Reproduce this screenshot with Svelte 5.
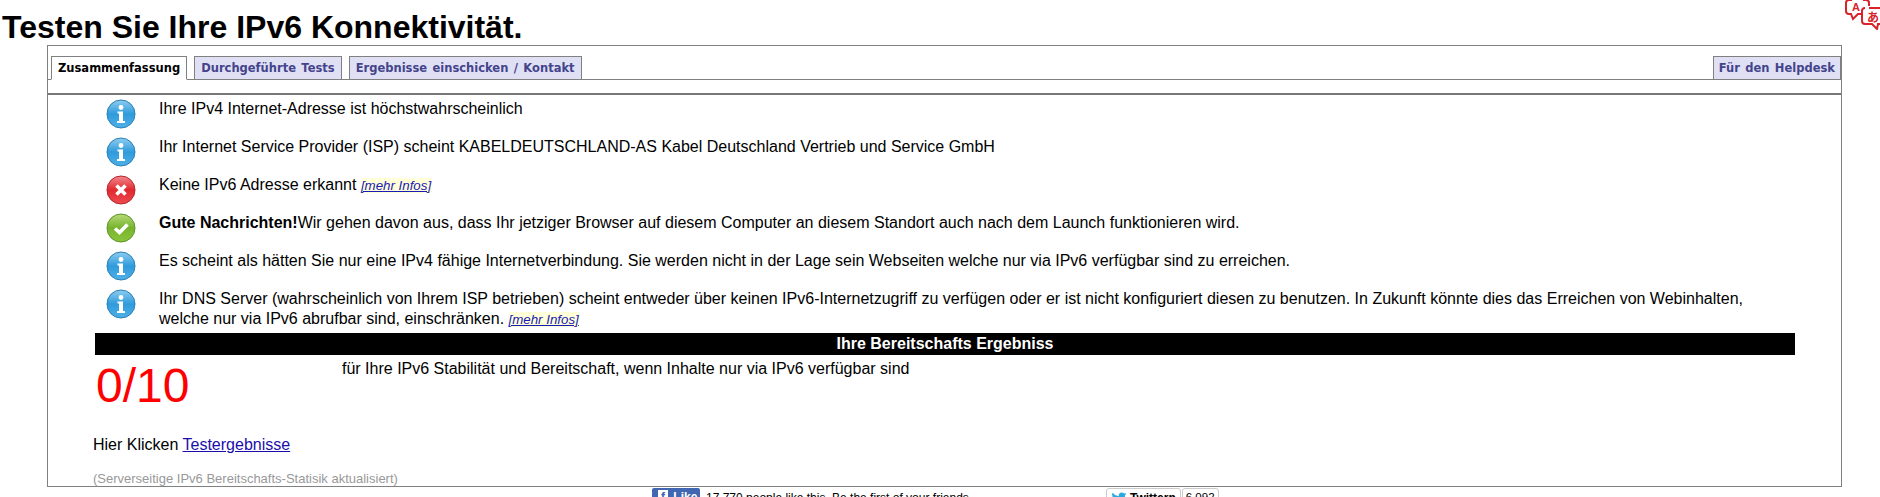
<script>
  const rows = [
    { icon: 'info', text: 'Ihre IPv4 Internet-Adresse ist höchstwahrscheinlich' },
    { icon: 'info', text: 'Ihr Internet Service Provider (ISP) scheint KABELDEUTSCHLAND-AS Kabel Deutschland Vertrieb und Service GmbH' },
    { icon: 'bad', text: 'Keine IPv6 Adresse erkannt ', more: true },
    { icon: 'ok', strong: 'Gute Nachrichten!', text: 'Wir gehen davon aus, dass Ihr jetziger Browser auf diesem Computer an diesem Standort auch nach dem Launch funktionieren wird.' },
    { icon: 'info', text: 'Es scheint als hätten Sie nur eine IPv4 fähige Internetverbindung. Sie werden nicht in der Lage sein Webseiten welche nur via IPv6 verfügbar sind zu erreichen.' },
    { icon: 'info', text: 'Ihr DNS Server (wahrscheinlich von Ihrem ISP betrieben) scheint entweder über keinen IPv6-Internetzugriff zu verfügen oder er ist nicht konfiguriert diesen zu benutzen. In Zukunft könnte dies das Erreichen von Webinhalten, welche nur via IPv6 abrufbar sind, einschränken. ', more: true }
  ];
</script>

<div class="page">
  <h1>Testen Sie Ihre IPv6 Konnektivität.</h1>

  <svg class="translate" viewBox="0 0 35 30" width="35" height="30" fill="none" stroke="#d8232a" stroke-width="2">
    <path d="M7 0H4a3 3 0 0 0-3 3v8a3 3 0 0 0 3 3h2l2 5 5-5h3" />
    <path d="M18 0h3a3 3 0 0 1 3 3v3" />
    <text x="7" y="11" class="tr-a">A</text>
    <path d="M20 8a3 3 0 0 0-3 3v10a3 3 0 0 0 3 3h7l5 5 1-5h2" />
    <path d="M24 8h11" />
    <text x="22" y="22" class="tr-j">あ</text>
  </svg>

  <div class="box">
    <div class="tabs">
      <span class="tab active">Zusammenfassung</span>
      <span class="tab">Durchgeführte Tests</span>
      <span class="tab">Ergebnisse einschicken / Kontakt</span>
      <span class="tab helpdesk">Für den Helpdesk</span>
    </div>
    <div class="rule"></div>

    <div class="rows">
      {#each rows as r}
        <div class="row">
          <svg class="icon" viewBox="0 0 30 30" width="30" height="30">
            <defs>
              <linearGradient id="g-info" x1="0" y1="0" x2="0" y2="1">
                <stop offset="0" stop-color="#8fcdf0" />
                <stop offset="0.5" stop-color="#2f9bdc" />
                <stop offset="1" stop-color="#4fb0e6" />
              </linearGradient>
              <linearGradient id="g-bad" x1="0" y1="0" x2="0" y2="1">
                <stop offset="0" stop-color="#f28a8e" />
                <stop offset="0.5" stop-color="#e0282f" />
                <stop offset="1" stop-color="#ee4a50" />
              </linearGradient>
              <linearGradient id="g-ok" x1="0" y1="0" x2="0" y2="1">
                <stop offset="0" stop-color="#b7da7c" />
                <stop offset="0.5" stop-color="#77b32c" />
                <stop offset="1" stop-color="#8cc63f" />
              </linearGradient>
            </defs>
            <circle cx="15" cy="15" r="14" fill="url(#g-{r.icon})" stroke={r.icon === 'info' ? '#2a7fb5' : r.icon === 'bad' ? '#b3262b' : '#5f9427'} stroke-width="1" />
            {#if r.icon === 'info'}
              <circle cx="15" cy="8.500" r="2.400" fill="#fff" />
              <path d="M11.500 12.500h5.500v9.500h2v2h-8v-2h2v-7.500h-1.500z" fill="#fff" />
            {:else if r.icon === 'bad'}
              <path d="M10.500 10.500l9 9M19.500 10.500l-9 9" stroke="#fff" stroke-width="3.600" />
            {:else}
              <path d="M9 15.500l4.500 4 8-8" stroke="#fff" stroke-width="3.600" fill="none" />
            {/if}
          </svg>
          <p>
            {#if r.strong}<b>{r.strong}</b>{/if}{r.text}{#if r.more}<a class="more" href="#more">[mehr Infos]</a>{/if}
          </p>
        </div>
      {/each}
    </div>

    <div class="bar">Ihre Bereitschafts Ergebniss</div>

    <div class="score">
      <div class="num">0/10</div>
      <div class="desc">für Ihre IPv6 Stabilität und Bereitschaft, wenn Inhalte nur via IPv6 verfügbar sind</div>
    </div>

    <p class="click">Hier Klicken <a href="#results">Testergebnisse</a></p>
    <p class="note">(Serverseitige IPv6 Bereitschafts-Statisik aktualisiert)</p>
  </div>

  <div class="social">
    <span class="like"><b class="f">f</b> Like</span>
    <span class="count">17,770 people like this. Be the first of your friends.</span>
    <span class="tw">
      <svg viewBox="0 0 16 14" width="16" height="13"><path d="M16 2c-.6.3-1.200.4-1.900.5.700-.4 1.200-1 1.400-1.800-.6.4-1.300.6-2.100.8A3.300 3.300 0 0 0 7.800 4.500 9.300 9.300 0 0 1 1.100.7a3.300 3.300 0 0 0 1 4.400c-.5 0-1-.2-1.500-.4 0 1.600 1.100 3 2.600 3.300-.5.100-1 .1-1.500 0 .4 1.300 1.600 2.200 3.100 2.300A6.600 6.600 0 0 1 0 11.700 9.300 9.300 0 0 0 14.400 3.400c.6-.4 1.200-.9 1.600-1.400z" fill="#2aa9e0" /></svg>
      Twittern
    </span>
    <span class="tw-count">6,092</span>
  </div>
</div>

<style>
  :global(body) {
    overflow: hidden;
    background: #fff;
    font-family: "Liberation Sans", Arial, sans-serif;
    color: #000;
  }
  .page {
    position: relative;
    height: 497px;
    overflow: hidden;
  }
  h1 {
    margin: 0;
    padding: 9px 0 0 2px;
    height: 36px;
    font-size: 32px;
    line-height: 36px;
    font-weight: bold;
    color: #000;
  }
  .translate {
    position: absolute;
    top: 0;
    right: 0;
  }
  .tr-a {
    font: bold 11px "Liberation Sans", sans-serif;
    fill: #d8232a;
    stroke: none;
  }
  .tr-j {
    font: bold 12px "Noto Sans CJK JP", sans-serif;
    fill: #d8232a;
    stroke: none;
  }
  .box {
    box-sizing: border-box;
    height: 442px;
    margin-left: 47px;
    width: 1795px;
    border: 1px solid #808080;
    position: relative;
  }
  .tabs {
    display: flex;
    gap: 7px;
    height: 34px;
    padding: 11px 0 0 3px;
    box-sizing: border-box;
    border-bottom: 1px solid #808080;
    align-items: flex-end;
  }
  .tab {
    box-sizing: border-box;
    height: 24px;
    margin-bottom: -1px;
    padding: 0 6px;
    border: 1px solid #808080;
    background: #e0e0f4;
    color: #44448c;
    font: bold 11.500px/22px "DejaVu Sans", Verdana, sans-serif;
    word-spacing: 1.400px;
  }
  .tab.active {
    background: #fff;
    color: #000;
    border-bottom-color: #fff;
  }
  .tab.helpdesk {
    margin-left: auto;
    padding: 0 5px;
  }
  .rule {
    height: 2px;
    margin-top: 13px;
    background: #777;
  }
  .rows {
    padding: 0 0 0 58px;
  }
  .row {
    display: flex;
    min-height: 38px;
    gap: 23px;
  }
  .row p {
    margin: 3.500px 50px 0 0;
    font-size: 16px;
    line-height: 20px;
  }
  .icon {
    flex: none;
    margin-top: 4px;
  }
  .more {
    font: italic 13.300px "Liberation Sans", sans-serif;
    color: #1a1ab6;
    background: #ffffd8;
  }
  .bar {
    margin: 4px 46px 0 47px;
    height: 22px;
    background: #000;
    color: #fff;
    font-size: 16px;
    font-weight: bold;
    line-height: 22px;
    text-align: center;
  }
  .score {
    display: flex;
    height: 66px;
    padding-left: 48px;
  }
  .num {
    width: 246px;
    color: #f00;
    font-size: 48px;
    line-height: 62px;
  }
  .desc {
    padding-top: 2.500px;
    font-size: 16px;
    line-height: 24px;
  }
  .click {
    margin: 14.500px 0 0 45px;
    font-size: 16px;
    line-height: 20px;
  }
  .click a {
    color: #1a0dab;
  }
  .note {
    margin: 15.500px 0 0 45px;
    font-size: 13px;
    line-height: 16px;
    color: #999;
  }
  .social {
    display: flex;
    align-items: flex-start;
    padding: 1px 0 0 652px;
    font-size: 11px;
  }
  .like {
    background: #4267b2;
    color: #fff;
    padding: 2px 6px;
    width: 48px;
    box-sizing: border-box;
    font-weight: bold;
    font-size: 12px;
    height: 20px;
    border-radius: 2px;
    white-space: nowrap;
  }
  .f {
    display: inline-block;
    width: 10px;
    margin-right: 2px;
    background: #fff;
    color: #4267b2;
    text-align: center;
  }
  .count {
    margin-left: 6px;
    width: 400px;
    font-size: 12px;
    line-height: 20px;
  }
  .tw {
    display: flex;
    gap: 3px;
    align-items: center;
    height: 18px;
    padding: 0 4px;
    border: 1px solid #ccc;
    border-radius: 3px;
    font-size: 12px;
    font-weight: bold;
  }
  .tw-count {
    margin-left: 1px;
    padding: 2px 3px;
    border: 1px solid #ccc;
    border-radius: 3px;
    font-size: 11.500px;
  }
</style>
